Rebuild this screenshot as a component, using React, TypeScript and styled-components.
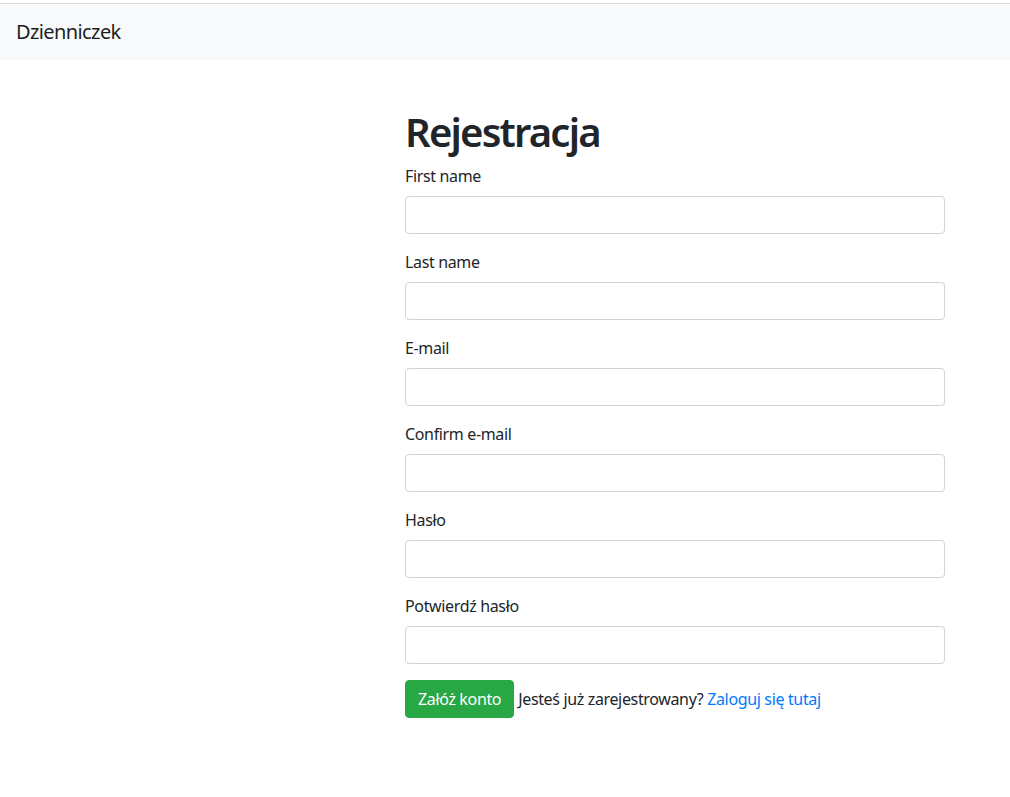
import React from "react";
import styled, { createGlobalStyle } from "styled-components";

const Global = createGlobalStyle`
  html, body { margin: 0; padding: 0; background: #fff; }
  body {
    font-family: "Noto Sans", "Segoe UI", Roboto, "Liberation Sans", sans-serif;
    font-size: 16px;
    line-height: 1.5;
    letter-spacing: -0.35px;
    color: #212529;
  }
  * { box-sizing: border-box; }
`;

const Page = styled.div`
  padding-top: 3px;
`;

const Navbar = styled.nav`
  border-top: 1px solid #dcdcdc;
  background: #f8f9fa;
  height: 57px;
  padding: 8px 16px;
  display: flex;
  align-items: center;
`;

const Brand = styled.a`
  font-size: 20px;
  line-height: 30px;
  letter-spacing: -0.6px;
  color: rgba(0, 0, 0, 0.9);
  text-decoration: none;
`;

const Main = styled.main`
  padding: 48px 0 0 405px;
`;

const Form = styled.form`
  width: 540px;
`;

const Title = styled.h1`
  margin: 0 0 8px;
  font-size: 40px;
  font-weight: 600;
  letter-spacing: -1.8px;
  line-height: 1.2;
`;

const Group = styled.div`
  margin-bottom: 16px;
`;

const Label = styled.label`
  display: block;
  margin-bottom: 8px;
`;

const Input = styled.input`
  display: block;
  width: 100%;
  height: 38px;
  padding: 6px 12px;
  font: inherit;
  border: 1px solid #ced4da;
  border-radius: 4px;
  background: #fff;
`;

const Actions = styled.div`
  display: flex;
  align-items: center;
  gap: 4px;
`;

const Button = styled.button`
  height: 38px;
  padding: 6px 12px;
  font: inherit;
  letter-spacing: inherit;
  color: #fff;
  background: #28a745;
  border: 1px solid #28a745;
  border-radius: 4px;
`;

const Note = styled.span``;

const Link = styled.a`
  color: #007bff;
  text-decoration: none;
`;

const fields = [
  { label: "First name", type: "text" },
  { label: "Last name", type: "text" },
  { label: "E-mail", type: "email" },
  { label: "Confirm e-mail", type: "email" },
  { label: "Hasło", type: "password" },
  { label: "Potwierdź hasło", type: "password" },
];

export default function App() {
  return (
    <Page>
      <Global />
      <Navbar>
        <Brand href="#">Dzienniczek</Brand>
      </Navbar>
      <Main>
        <Form onSubmit={(e) => e.preventDefault()}>
          <Title>Rejestracja</Title>
          {fields.map((f) => (
            <Group key={f.label}>
              <Label>{f.label}</Label>
              <Input type={f.type} />
            </Group>
          ))}
          <Actions>
            <Button type="submit">Załóż konto</Button>
            <Note>
              Jesteś już zarejestrowany? <Link href="#">Zaloguj się tutaj</Link>
            </Note>
          </Actions>
        </Form>
      </Main>
    </Page>
  );
}
